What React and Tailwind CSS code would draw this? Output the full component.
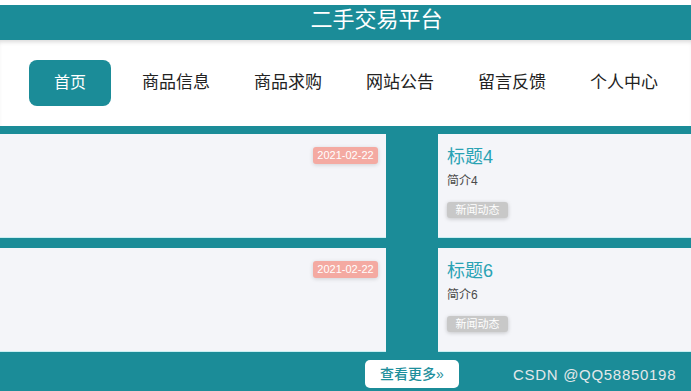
// 二手交易平台 首页

const navItems = ["商品信息", "商品求购", "网站公告", "留言反馈", "个人中心"];

const rows = [
  { title: "标题4", intro: "简介4", date: "2021-02-22" },
  { title: "标题6", intro: "简介6", date: "2021-02-22" },
];

function NewsRow({ row }) {
  return (
    <div className="grid grid-cols-[386px_1fr] gap-x-[52px] h-[104px]">
      {/* 左侧 */}
      <div className="bg-[#f4f5f9] border-b border-[#c9eef2] flex justify-end items-start pt-[13px] pr-[8px]">
        <span className="h-[17px] w-[65px] flex items-center justify-center rounded-[3px] bg-[#f4aaa2] text-white text-[11px] font-medium shadow-[0_1px_4px_rgba(0,0,0,0.15)]">
          {row.date}
        </span>
      </div>

      {/* 右侧 */}
      <div className="bg-[#f4f5f9] border-b border-[#c9eef2] pl-[9px] pt-[12px] flex flex-col items-start">
        <div className="text-[18px] leading-[22px] text-[#2aa3b4]">{row.title}</div>
        <div className="mt-[5px] text-[12px] leading-[16px] text-[#4a4a4a]">{row.intro}</div>
        <span className="mt-[13px] h-[16px] w-[61px] flex items-center justify-center rounded-[3px] bg-[#c8c8c8] text-white text-[11px] shadow-[0_1px_4px_rgba(0,0,0,0.2)]">
          新闻动态
        </span>
      </div>
    </div>
  );
}

export default function App() {
  return (
    <div className="relative w-[691px] h-[391px] overflow-hidden bg-[#1b8c98] font-['Liberation_Sans','Noto_Sans_CJK_SC',sans-serif]">
      {/* 顶部留白 */}
      <div className="h-[5px] bg-white" />

      {/* 标题栏 */}
      <div className="h-[35px] flex items-center justify-center pl-[62px] pb-[6px]">
        <span className="text-white text-[22px] leading-none">二手交易平台</span>
      </div>

      {/* 导航 */}
      <nav className="h-[86px] bg-white shadow-[inset_0_4px_4px_-2px_rgba(0,0,0,0.15)] flex items-center pl-[29px]">
        <button className="w-[82px] h-[46px] rounded-[8px] bg-[#1b8c98] text-white text-[16px]">
          首页
        </button>
        <div className="flex ml-[9px]">
          {navItems.map((item) => (
            <span key={item} className="w-[112px] text-center text-[17px] text-[#222]">
              {item}
            </span>
          ))}
        </div>
      </nav>

      {/* 新闻列表 */}
      <div className="pt-[8px] flex flex-col gap-[10px]">
        {rows.map((row) => (
          <NewsRow key={row.title} row={row} />
        ))}
      </div>

      {/* 查看更多 */}
      <div className="pt-[8px] pl-[365px]">
        <button className="w-[94px] h-[28px] rounded-[5px] bg-white text-[#1e8f9c] text-[14px] font-medium flex items-center justify-center">
          查看更多»
        </button>
      </div>

      {/* 水印 */}
      <span className="absolute left-[513px] top-[364px] text-[15px] text-[#e3e8ea] tracking-[0.7px]">
        CSDN @QQ58850198
      </span>
    </div>
  );
}
